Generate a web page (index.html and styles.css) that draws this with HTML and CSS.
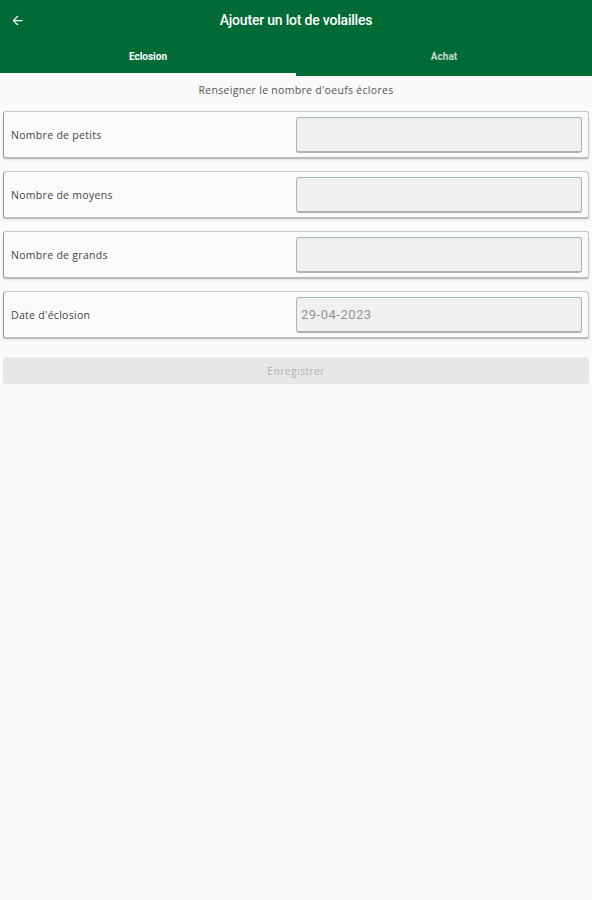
FILE: index.html
```html
<!DOCTYPE html>
<html lang="fr">
<head>
  <meta charset="UTF-8" />
  <meta name="viewport" content="width=device-width, initial-scale=1" />
  <title>Ajouter un lot de volailles</title>
  <link rel="stylesheet" href="styles.css">
</head>
<body>
  <header class="appbar">
    <div class="topbar">
      <button class="back" aria-label="Retour">
        <svg width="15" height="15" viewBox="0 0 24 24"><path d="M20 11H7.83l5.59-5.59L12 4l-8 8 8 8 1.41-1.41L7.83 13H20v-2z" fill="#fff"/></svg>
      </button>
      <h1>Ajouter un lot de volailles</h1>
    </div>
    <nav class="tabs">
      <div class="tab active">Eclosion</div>
      <div class="tab">Achat</div>
    </nav>
  </header>

  <main>
    <p class="hint">Renseigner le nombre d'oeufs éclores</p>

    <div class="field">
      <label>Nombre de petits</label>
      <input type="text" />
    </div>
    <div class="field">
      <label>Nombre de moyens</label>
      <input type="text" />
    </div>
    <div class="field">
      <label>Nombre de grands</label>
      <input type="text" />
    </div>
    <div class="field">
      <label>Date d'éclosion</label>
      <input type="text" value="29-04-2023" />
    </div>

    <button class="save" disabled>Enregistrer</button>
  </main>
</body>
</html>
```

FILE: styles.css
```css
body {
  margin: 0;
  background: #fafafa;
  font-family: "Open Sans", sans-serif;
  color: #333;
}
.appbar {
  background: #016b36;
  color: white;
}
.topbar {
  height: 40px;
  display: flex;
  align-items: center;
  position: relative;
}
.back {
  background: none;
  border: 0;
  padding: 0 0 0 10px;
  display: flex;
  align-items: center;
}
.topbar h1 {
  margin: 0;
  position: absolute;
  left: 0;
  right: 0;
  text-align: center;
  font-family: Roboto, sans-serif;
  font-weight: 500;
  font-size: 14px;
  pointer-events: none;
  letter-spacing: -0.2px;
}
.tabs {
  display: flex;
}
.tab {
  flex: 1;
  text-align: center;
  font-family: Roboto, sans-serif;
  font-weight: 700;
  font-size: 10px;
  height: 36px;
  line-height: 34px;
  box-sizing: border-box;
  color: #c5dccd;
}
.tab.active {
  color: white;
  border-bottom: 3px solid #fafafa;
  line-height: 34px;
}
.hint {
  text-align: center;
  font-size: 10.5px;
  letter-spacing: 0.3px;
  color: #555;
  margin: 7px 0 14px;
}
main {
  padding: 0 3px;
}
.field {
  display: flex;
  align-items: center;
  justify-content: space-between;
  height: 48px;
  box-sizing: border-box;
  border: 1px solid #c9c9c9;
  border-left-color: #9a9a9a;
  border-bottom: 2px solid #bcbcbc;
  border-radius: 3px;
  background: #fbfbfb;
  padding: 0 6px 0 7px;
  margin-bottom: 12px;
  box-shadow: 0 1px 2px rgba(0,0,0,0.12);
}
.field label {
  font-size: 10.5px;
  letter-spacing: 0.3px;
  color: #444;
}
.field input {
  width: 286px;
  height: 36px;
  box-sizing: border-box;
  background: #f0f0f0;
  border: 1px solid #9dbcaa;
  border-bottom: 2px solid #a9b5ae;
  border-radius: 3px;
  font-family: Roboto, sans-serif;
  font-size: 13px;
  letter-spacing: 0.5px;
  color: #949494;
  padding: 0 4px;
}
.save {
  display: block;
  width: 100%;
  height: 27px;
  margin-top: 18px;
  border: 0;
  border-radius: 3px;
  background: #e5e7e9;
  color: #b2b2b2;
  font-family: "Open Sans", sans-serif;
  font-size: 10.5px;
  letter-spacing: 0.3px;
}
```
